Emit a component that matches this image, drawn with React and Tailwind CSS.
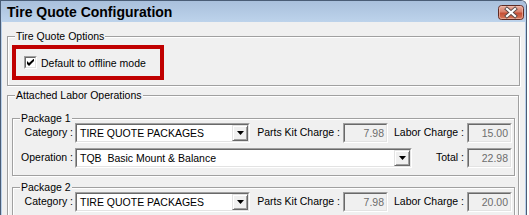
import React from "react";

const Sunken = ({ className, children }) => (
  <div
    className={`border border-t-[#a0a0a0] border-l-[#a0a0a0] border-b-white border-r-white ${className}`}
  >
    <div className="h-full w-full border border-t-[#696969] border-l-[#696969] border-b-[#e3e3e3] border-r-[#e3e3e3] flex">
      {children}
    </div>
  </div>
);

const DropBtn = () => (
  <div className="w-[16px] h-full bg-[#f0f0f0] border border-t-[#e3e3e3] border-l-[#e3e3e3] border-b-[#696969] border-r-[#696969] shadow-[inset_1px_1px_0_#fff,inset_-1px_-1px_0_#a0a0a0] flex items-center justify-center">
    <svg width="7" height="4" viewBox="0 0 7 4">
      <path d="M0 0h7L3.5 4z" fill="#000" />
    </svg>
  </div>
);

const Combo = ({ className, text }) => (
  <Sunken className={`h-[20px] shrink-0 bg-white ${className}`}>
    <span className="flex-1 pl-[3px] leading-[16px] whitespace-pre text-black">{text}</span>
    <DropBtn />
  </Sunken>
);

const TextBox = ({ value }) => (
  <Sunken className="w-[45px] h-[20px] shrink-0 bg-[#f0f0f0]">
    <span className="flex-1 text-right pr-[2px] leading-[16px] text-[#6d6d6d]">{value}</span>
  </Sunken>
);

const Group = ({ label, className, children }) => (
  <div
    className={`relative shrink-0 border border-[#a0a0a0] shadow-[inset_1px_1px_0_#fff,1px_1px_0_#fff] ${className}`}
  >
    <span className="absolute top-[-7px] left-[7px] px-[1px] bg-[#f0f0f0] leading-[12px] whitespace-nowrap">
      {label}
    </span>
    {children}
  </div>
);

const OP_TEXT = "TQB  Basic Mount & Balance";

const Package = ({ label, labor, total, second, className }) => (
  <Group label={label} className={`w-[503px] ml-[4px] pt-[4px] pb-[7px] flex flex-col gap-[5px] ${className}`}>
    <div className="flex items-center h-[20px] shrink-0">
      <span className="w-[62px] shrink-0 text-right pr-[2px] whitespace-nowrap">Category :</span>
      <Combo className="w-[175px]" text="TIRE QUOTE PACKAGES" />
      <span className="w-[93px] shrink-0 text-right pr-[3px] whitespace-nowrap">Parts Kit Charge :</span>
      <TextBox value="7.98" />
      <span className="w-[79px] shrink-0 text-right pr-[3px] whitespace-nowrap">Labor Charge :</span>
      <TextBox value={labor} />
    </div>
    {!second && (
      <div className="flex items-center h-[20px] shrink-0">
        <span className="w-[62px] shrink-0 text-right pr-[2px] whitespace-nowrap">Operation :</span>
        <Combo className="w-[337px]" text={OP_TEXT} />
        <span className="w-[55px] shrink-0 text-right pr-[3px] whitespace-nowrap">Total :</span>
        <TextBox value={total} />
      </div>
    )}
  </Group>
);

export default function App() {
  return (
    <div className="w-[529px] h-[215px] overflow-hidden bg-white font-['Liberation_Sans',Arial,sans-serif] text-[10.5px] text-black">
      <div className="w-[527px] h-[215px] flex flex-col border-t border-l border-r border-[#4a5d76] rounded-tr-[6px] overflow-hidden">
        <div className="h-[21px] shrink-0 flex items-center justify-between pl-[6px] pr-[2px] bg-gradient-to-b from-[#a9c0dc] to-[#bdd3eb]">
          <span className="text-[14px] font-bold leading-[16px] mt-[1px] text-black">Tire Quote Configuration</span>
          <svg width="26" height="15" viewBox="0 0 26 15" className="mt-[1px]">
            <defs>
              <linearGradient id="cg" x1="0" y1="0" x2="0" y2="1">
                <stop offset="0" stopColor="#eab1a3" />
                <stop offset="0.45" stopColor="#d9816c" />
                <stop offset="0.55" stopColor="#c54f36" />
                <stop offset="1" stopColor="#d87c5e" />
              </linearGradient>
            </defs>
            <rect x="0.5" y="0.5" width="25" height="14" rx="3" fill="url(#cg)" stroke="#5e2b24" />
            <rect x="1.5" y="1.5" width="23" height="12" rx="2" fill="none" stroke="#f3c4b8" strokeOpacity="0.6" />
            <path d="M9 4l8 7M17 4l-8 7" stroke="#5a4a48" strokeWidth="4" strokeLinecap="square" />
            <path d="M9 4l8 7M17 4l-8 7" stroke="#ffffff" strokeWidth="2.2" strokeLinecap="square" />
          </svg>
        </div>
        <div className="flex-1 min-h-0 overflow-hidden flex bg-[#f0f0f0]">
          <div className="w-[1px] shrink-0 bg-[#b9d0ea]" />
          <div className="flex-1 flex flex-col">
            <Group label="Tire Quote Options" className="w-[513px] h-[50px] ml-[5px] mt-[14px]">
              <div className="ml-[4px] mt-[8px] w-[152px] h-[35px] border-[4px] border-[#c00000] flex items-center pl-[8px]">
                <div className="w-[13px] h-[13px] shrink-0 border border-t-[#a0a0a0] border-l-[#a0a0a0] border-b-white border-r-white">
                  <div className="w-full h-full bg-white border border-t-[#696969] border-l-[#696969] border-b-[#e3e3e3] border-r-[#e3e3e3] flex items-center justify-center">
                    <svg width="7" height="7" viewBox="0 0 7 7">
                      <path d="M0 2v3l2 2 5-5V-0.5L2 4z" fill="#000" />
                    </svg>
                  </div>
                </div>
                <span className="ml-[4px] whitespace-nowrap leading-[12px]">Default to offline mode</span>
              </div>
            </Group>
            <Group label="Attached Labor Operations" className="w-[512px] h-[140px] ml-[5px] mt-[9px]">
              <Package label="Package 1" labor="15.00" total="22.98" className="mt-[22px]" />
              <Package label="Package 2" labor="20.00" second className="mt-[11px]" />
            </Group>
          </div>
          <div className="w-[1px] shrink-0 bg-[#b9d0ea]" />
        </div>
      </div>
    </div>
  );
}
